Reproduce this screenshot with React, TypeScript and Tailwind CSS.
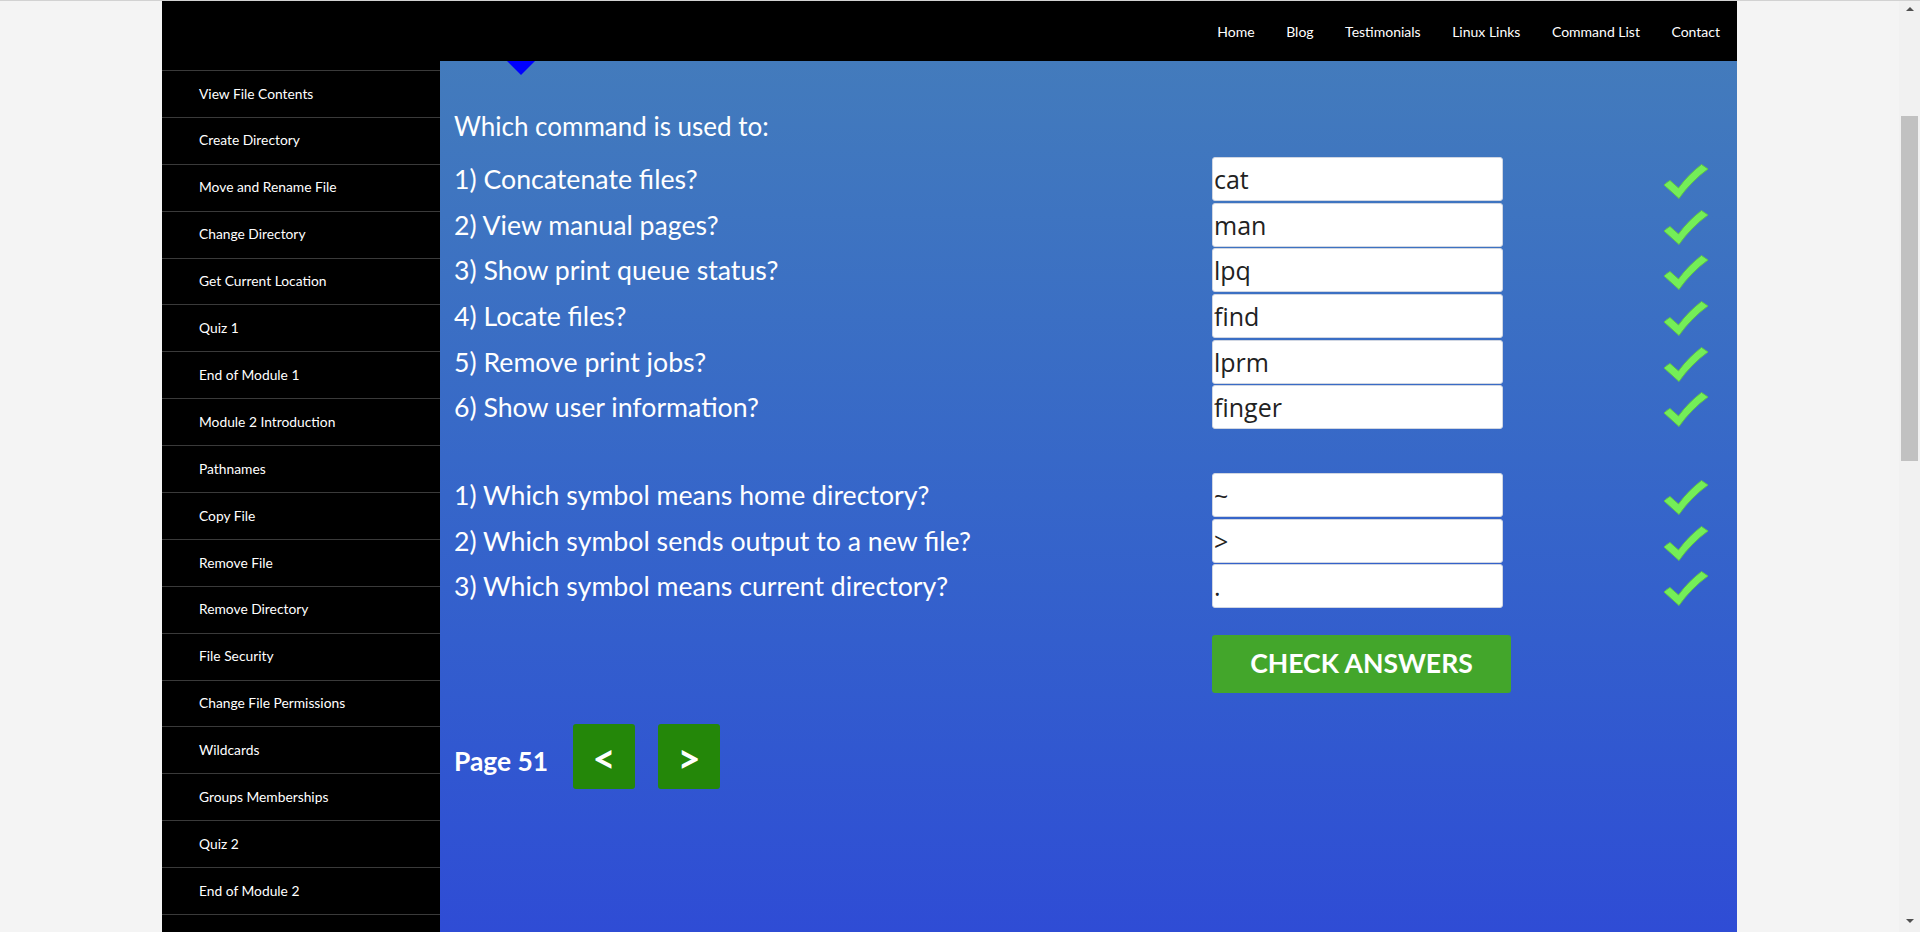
import { useState } from "react";

const navLinks = ["Home", "Blog", "Testimonials", "Linux Links", "Command List", "Contact"];

const lessons = [
  "View File Contents",
  "Create Directory",
  "Move and Rename File",
  "Change Directory",
  "Get Current Location",
  "Quiz 1",
  "End of Module 1",
  "Module 2 Introduction",
  "Pathnames",
  "Copy File",
  "Remove File",
  "Remove Directory",
  "File Security",
  "Change File Permissions",
  "Wildcards",
  "Groups Memberships",
  "Quiz 2",
  "End of Module 2",
];

const commandQuestions = [
  { q: "1) Concatenate files?", a: "cat" },
  { q: "2) View manual pages?", a: "man" },
  { q: "3) Show print queue status?", a: "lpq" },
  { q: "4) Locate files?", a: "find" },
  { q: "5) Remove print jobs?", a: "lprm" },
  { q: "6) Show user information?", a: "finger" },
];

const symbolQuestions = [
  { q: "1) Which symbol means home directory?", a: "~" },
  { q: "2) Which symbol sends output to a new file?", a: ">" },
  { q: "3) Which symbol means current directory?", a: "." },
];

function Tick() {
  return (
    <svg width="46" height="38" viewBox="0 0 46 38" className="mt-[6px]">
      <path
        d="M1 22 C3 20 5 18.5 7 17.5 L15.5 25 C22 16 30 8 38.5 1.5 L45 6 C34 14 24 24 16 35.5 Z"
        fill="#74ee58"
        stroke="#5fc447"
        strokeWidth="1"
        strokeLinejoin="round"
      />
    </svg>
  );
}

function QuestionRow({ q, a }: { q: string; a: string }) {
  const [value, setValue] = useState(a);
  return (
    <div className="flex items-center h-[44px]">
      <span className="w-[758px] text-[26.7px] leading-[36px] text-white">{q}</span>
      <input
        value={value}
        onChange={(e) => setValue(e.target.value)}
        className="w-[291px] h-[44px] bg-white rounded-[3px] border border-[#d0d6e2] pl-[1px] text-[25px] text-[#222] font-['Open_Sans'] outline-none"
      />
      <div className="ml-[160px]">
        <Tick />
      </div>
    </div>
  );
}

function App() {
  return (
    <div className="h-[932px] w-full overflow-hidden bg-[#f4f4f4] border-t border-[#d2d2d2] flex font-['Lato',sans-serif]">
      <div className="flex-1 min-w-0">
        <div className="ml-[162px] w-[1575px] h-full flex flex-col">
          <header className="h-[60px] bg-black flex items-center justify-end gap-[31.5px] pr-[17px]">
            {navLinks.map((link) => (
              <a key={link} className="text-[14px] text-white">
                {link}
              </a>
            ))}
          </header>

          <div className="flex flex-1 min-h-0">
            <aside className="w-[278px] bg-black pt-[9px]">
              <ul className="border-t border-[#3a3a3a]">
                {lessons.map((lesson) => (
                  <li
                    key={lesson}
                    className="h-[46.9px] border-b border-[#3a3a3a] flex items-center pl-[37px] text-[13.8px] text-white"
                  >
                    {lesson}
                  </li>
                ))}
              </ul>
            </aside>

            <main className="relative flex-1 bg-gradient-to-b from-[#437bbc] to-[#2f4cd5] pl-[14px] pt-[47px]">
              {/* pointer from the active menu tab */}
              <div className="absolute left-[67px] top-0 w-0 h-0 border-l-[14px] border-r-[14px] border-t-[14px] border-l-transparent border-r-transparent border-t-[#0000ff]" />

              <h2 className="text-[26px] leading-[36px] text-white">Which command is used to:</h2>

              <div className="mt-[13px] flex flex-col gap-[1.7px]">
                {commandQuestions.map((item) => (
                  <QuestionRow key={item.q} q={item.q} a={item.a} />
                ))}
              </div>

              <div className="mt-[43.5px] flex flex-col gap-[1.7px]">
                {symbolQuestions.map((item) => (
                  <QuestionRow key={item.q} q={item.q} a={item.a} />
                ))}
              </div>

              <div className="mt-[27px] flex">
                <div className="w-[758px]" />
                <button className="w-[299px] h-[58px] rounded-[3px] bg-[#43a62b] text-white font-bold text-[26.6px] uppercase">
                  Check Answers
                </button>
              </div>

              <div className="mt-[31px] flex items-center">
                <span className="w-[119px] mt-[9px] text-white font-bold text-[26.4px]">Page 51</span>
                <button className="w-[62px] h-[65px] rounded-[3px] bg-[#248709] text-white font-bold text-[40px] leading-none pt-[2px]">
                  &lt;
                </button>
                <button className="ml-[23px] w-[62px] h-[65px] rounded-[3px] bg-[#248709] text-white font-bold text-[40px] leading-none pt-[2px]">
                  &gt;
                </button>
              </div>
            </main>
          </div>
        </div>
      </div>

      {/* window scrollbar */}
      <div className="w-[21px] h-full bg-[#f1f1f1] flex flex-col items-center">
        <div className="mt-[6px] w-0 h-0 border-l-[4px] border-r-[4px] border-b-[4px] border-l-transparent border-r-transparent border-b-[#505050]" />
        <div className="mt-[105px] w-[17px] h-[345px] bg-[#c1c1c1]" />
        <div className="flex-1" />
        <div className="mb-[9px] w-0 h-0 border-l-[4px] border-r-[4px] border-t-[4px] border-l-transparent border-r-transparent border-t-[#505050]" />
      </div>
    </div>
  );
}

export default App;
